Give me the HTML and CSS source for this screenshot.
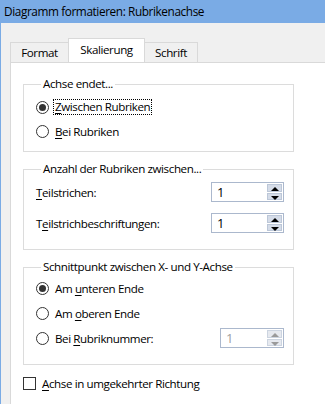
FILE: index.html
```html
<!DOCTYPE html>
<html lang="de">
<head>
  <meta charset="UTF-8" />
  <title>Diagramm formatieren: Rubrikenachse</title>
  <link rel="stylesheet" href="styles.css">
</head>
<body>
  <div class="titlebar">Diagramm formatieren: Rubrikenachse</div>

  <div class="dialog">
    <div class="tabs">
      <div class="tab">Format</div>
      <div class="tab active">Skalierung</div>
      <div class="tab">Schrift</div>
    </div>

    <div class="panel">
      <fieldset class="group g1">
        <legend>Achse endet...</legend>
        <div class="row">
          <span class="radio checked"></span>
          <span class="focus"><u>Z</u>wischen Rubriken</span>
        </div>
        <div class="row">
          <span class="radio"></span>
          <span><u>B</u>ei Rubriken</span>
        </div>
      </fieldset>

      <fieldset class="group g2">
        <legend>Anzahl der Rubriken zwischen...</legend>
        <div class="row field">
          <span class="lbl"><u>T</u>eilstrichen:</span>
          <div class="spin">
            <span class="val">1</span>
            <div class="btns"><span class="up"></span><span class="down"></span></div>
          </div>
        </div>
        <div class="row field second">
          <span class="lbl">T<u>e</u>ilstrichbeschriftungen:</span>
          <div class="spin">
            <span class="val">1</span>
            <div class="btns"><span class="up"></span><span class="down"></span></div>
          </div>
        </div>
      </fieldset>

      <fieldset class="group g3">
        <legend>Schnittpunkt zwischen X- und Y-Achse</legend>
        <div class="row">
          <span class="radio checked"></span>
          <span>Am <u>u</u>nteren Ende</span>
        </div>
        <div class="row">
          <span class="radio"></span>
          <span>Am <u>o</u>beren Ende</span>
        </div>
        <div class="row field">
          <span class="radio"></span>
          <span class="lbl">Bei <u>R</u>ubriknummer:</span>
          <div class="spin small disabled">
            <span class="val">1</span>
            <div class="btns"><span class="up"></span><span class="down"></span></div>
          </div>
        </div>
      </fieldset>

      <div class="row check">
        <span class="box"></span>
        <span><u>A</u>chse in umgekehrter Richtung</span>
      </div>
    </div>
  </div>
</body>
</html>
```

FILE: styles.css
```css
html, body {
  margin: 0;
  padding: 0;
  height: 100%;
}
body {
  font-family: "Open Sans", "Noto Sans", sans-serif;
  font-size: 11.6px;
  letter-spacing: -0.4px;
  color: #000;
  background: #f0f0f0;
  border-left: 1px solid #7aabe5;
  overflow: hidden;
}
u {
  text-decoration: underline;
  text-underline-offset: 2px;
}
.titlebar {
  height: 23px;
  line-height: 23px;
  background: #7aabe5;
  padding-left: 3px;
  font-size: 11.8px;
  white-space: nowrap;
}
.dialog {
  padding: 16px 0 0 9px;
}
.tabs {
  display: flex;
  align-items: flex-end;
  height: 23px;
  position: relative;
  z-index: 1;
}
.tab {
  height: 19px;
  line-height: 19px;
  border: 1px solid #d9d9d9;
  border-bottom: none;
  background: #f0f0f0;
  padding: 0 9px;
  text-align: center;
}
.tab:first-child {
  width: 39px;
}
.tab.active {
  height: 23px;
  line-height: 22px;
  background: #fff;
  width: 57px;
  margin: 0 -1px;
  position: relative;
  z-index: 2;
}
.tab:last-child {
  width: 34px;
}
.panel {
  background: #fff;
  border: 1px solid #d9d9d9;
  border-right: none;
  padding: 13px 0 0 12px;
  height: 330px;
}
.group {
  margin: 0;
  padding: 0 0 0 12px;
  width: 257px;
  border: 1px solid #dcdcdc;
}
.group legend {
  padding: 0 2px;
  margin-left: 5px;
  line-height: 16px;
  white-space: nowrap;
}
.g1 {
  padding-top: 3px;
  padding-bottom: 8px;
}
.g2 {
  margin-top: 9px;
  padding-top: 3px;
  padding-bottom: 14px;
}
.g3 {
  margin-top: 9px;
  padding-top: 1px;
  padding-bottom: 14px;
}
.row {
  display: flex;
  align-items: center;
  height: 24px;
  white-space: nowrap;
}
.g3 .row + .row {
  margin-top: 1px;
}
.field .lbl {
  flex: 1;
}
.second {
  margin-top: 7px;
}
.radio {
  width: 11px;
  height: 11px;
  border: 1px solid #333;
  border-radius: 50%;
  margin-right: 6px;
  position: relative;
  flex: none;
}
.radio.checked::after {
  content: "";
  position: absolute;
  left: 2px;
  top: 2px;
  width: 7px;
  height: 7px;
  border-radius: 50%;
  background: #333;
}
.focus {
  outline: 1px dotted #000;
  outline-offset: 0;
  padding: 0 1px;
  margin-left: -1px;
  line-height: 14px;
}
.spin {
  display: flex;
  width: 71px;
  height: 18px;
  border: 1px solid #abb8cd;
  margin-right: 9px;
  background: #fff;
}
.spin .val {
  flex: 1;
  padding-left: 5px;
  line-height: 18px;
  font-size: 13px;
}
.spin .btns {
  width: 15px;
  display: flex;
  flex-direction: column;
  gap: 1px;
  padding: 1px 1px 1px 0;
}
.btns span {
  flex: 1;
  background: #d5dce8;
  border: 1px solid #bcc7d8;
  position: relative;
}
.btns span::after {
  content: "";
  position: absolute;
  left: 3px;
  width: 0;
  height: 0;
  border-left: 4px solid transparent;
  border-right: 4px solid transparent;
}
.btns .up::after {
  top: 2px;
  border-bottom: 4px solid #000;
}
.btns .down::after {
  top: 2px;
  border-top: 4px solid #000;
}
.spin.small {
  width: 62px;
}
.spin.disabled .val {
  color: #a0a0a0;
}
.spin.disabled .btns span {
  background: #e6e9ef;
  border-color: #ccd4e0;
}
.spin.disabled .up::after {
  border-bottom-color: #9a9a9a;
}
.spin.disabled .down::after {
  border-top-color: #9a9a9a;
}
.check {
  margin-top: 6px;
}
.box {
  width: 11px;
  height: 11px;
  border: 1px solid #333;
  margin-right: 6px;
  flex: none;
}
```
